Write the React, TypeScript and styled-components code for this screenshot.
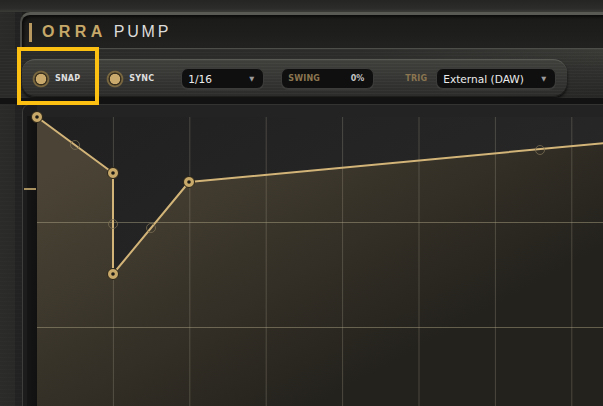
import React from "react";
import styled, { createGlobalStyle } from "styled-components";

const Global = createGlobalStyle`
  html, body { margin: 0; padding: 0; background: #1c1c1b; }
  #root { width: 603px; height: 406px; }
`;

const Root = styled.div`
  position: relative;
  width: 603px;
  height: 406px;
  overflow: hidden;
  display: flex;
  flex-direction: column;
  background:
    repeating-linear-gradient(0deg, rgba(255,255,255,0.012) 0 1px, transparent 1px 4px),
    linear-gradient(90deg, #2b2c2a 0px, #292a28 15px, #222 15px, #222 22px, #1c1c1b 22px);
  font-family: "DejaVu Sans", "Liberation Sans", sans-serif;
`;

const TopStrip = styled.div`
  height: 12px;
  flex: none;
  background: linear-gradient(180deg, #252624 0%, #2c2d2b 70%, #3a3a37 100%);
`;

const Header = styled.div`
  flex: none;
  height: 33px;
  margin-left: 20px;
  display: flex;
  align-items: center;
  padding-left: 7px;
  background: linear-gradient(180deg, #1a1a19 0%, #1e1e1c 60%, #222220 100%);
  border-top: 3px solid #5a5a54;
  border-left: 2px solid #4a4a46;
  border-bottom: 1px solid #4d4d49;
  border-top-left-radius: 10px;
  box-shadow: inset 2px 2px 3px rgba(0, 0, 0, 0.6);
`;

const GoldBar = styled.span`
  width: 3px;
  height: 19px;
  background: #b89a60;
  margin-right: 10px;
  margin-top: 1px;
`;

const Brand = styled.span`
  font-family: "Liberation Sans", Arial, sans-serif;
  font-weight: 700;
  font-size: 16px;
  letter-spacing: 4.4px;
  color: #c6a869;
  margin-right: 7px;
`;

const Product = styled.span`
  font-family: "Liberation Sans", Arial, sans-serif;
  font-weight: 400;
  font-size: 16px;
  letter-spacing: 2.8px;
  color: #dcdcda;
`;

const ToolbarBand = styled.div`
  flex: none;
  height: 49px;
  box-sizing: border-box;
  padding: 10px 0 0 22px;
  display: flex;
  background:
    repeating-linear-gradient(0deg, rgba(255,255,255,0.025) 0 1px, transparent 1px 3px),
    linear-gradient(90deg, #2a2a28 0%, #2c2c2a 60%, #34343a00 100%),
    linear-gradient(180deg, #3a3a37 0%, #30302e 40%, #262625 100%);
`;

const Toolbar = styled.div`
  width: 545px;
  height: 38px;
  box-sizing: border-box;
  display: flex;
  align-items: center;
  padding-left: 10px;
  border-radius: 13px 14px 14px 13px;
  border-top: 1px solid #5a5a55;
  background:
    repeating-linear-gradient(0deg, rgba(255,255,255,0.03) 0 1px, transparent 1px 3px),
    linear-gradient(180deg, #3f3f3c 0%, #363634 45%, #2b2b29 100%);
  box-shadow: 0 2px 3px rgba(0, 0, 0, 0.7), inset 0 -1px 0 rgba(0,0,0,0.4);
`;

const Radio = styled.span<{ $ml?: number }>`
  width: 18px;
  height: 18px;
  flex: none;
  border-radius: 50%;
  margin-left: ${(p) => p.$ml ?? 0}px;
  background: radial-gradient(
    circle,
    #c9aa6c 0 4.9px,
    #3a301f 5.4px 6.2px,
    #78663f 6.8px 7.8px,
    rgba(100, 86, 58, 0.45) 8.5px,
    transparent 9px
  );
`;

const Label = styled.span<{ $ml?: number; $gold?: boolean }>`
  margin-left: ${(p) => p.$ml ?? 0}px;
  font-family: "DejaVu Sans", sans-serif;
  font-weight: 700;
  font-size: 8px;
  letter-spacing: 0.2px;
  color: ${(p) => (p.$gold ? "#8a7550" : "#dedede")};
`;

const Field = styled.div<{ $w: number; $ml: number }>`
  width: ${(p) => p.$w}px;
  margin-left: ${(p) => p.$ml}px;
  height: 21px;
  box-sizing: border-box;
  display: flex;
  align-items: center;
  justify-content: space-between;
  padding: 0 9px 0 6px;
  border-radius: 7px;
  border: 1px solid #3c3c3a;
  background: #0f0f0f;
  box-shadow: 0 1px 0 rgba(255,255,255,0.05);
`;

const FieldText = styled.span`
  font-family: "DejaVu Sans", sans-serif;
  font-size: 10.6px;
  color: #ececec;
`;

const Arrow = styled.span`
  font-size: 6.5px;
  color: #9a9a9a;
  margin-top: 1px;
`;

const Value = styled.span`
  font-family: "DejaVu Sans", sans-serif;
  font-weight: 700;
  font-size: 8px;
  color: #c4c4c4;
`;

const Gap = styled.div`
  flex: none;
  height: 6px;
  background: #121212;
`;

const GraphPanel = styled.div`
  flex: 1;
  margin-left: 22px;
  display: flex;
  border-top: 1px solid #333331;
  border-left: 1px solid #3e3e3c;
  border-top-left-radius: 8px;
  background: #232323;
  overflow: hidden;
`;

const Meter = styled.div`
  position: relative;
  width: 14px;
  flex: none;
  display: flex;
  padding-top: 11px;
  background: #1c1c1c;
`;

const MeterTrack = styled.div`
  margin-left: 4px;
  flex: 1;
  background: linear-gradient(90deg, #151515, #111);
`;

const MeterTick = styled.span`
  position: absolute;
  left: 1px;
  top: 83px;
  width: 12px;
  height: 2px;
  background: #a8915f;
`;

const PAD = 8;

const Chart = styled.svg`
  display: block;
  flex: none;
  margin-left: -${PAD}px;
  position: relative;
`;

const W = 566;
const H = 302;
const TOP = 12;
const STEP = 76.4;

const pts: [number, number][] = [
  [0, 12],
  [76, 68],
  [76, 169],
  [152, 77],
  [W + 2, 38],
];

const handles: [number, number][] = [
  [38, 40],
  [76, 119],
  [114, 123],
  [503, 45],
];

function Graph() {
  const line = pts.map((p) => p.join(",")).join(" ");
  const area = `0,${H} ${line} ${W + 2},${H}`;
  const vx = Array.from({ length: 7 }, (_, i) => (i + 1) * STEP);
  return (
    <Chart width={W + PAD} height={H} viewBox={`-${PAD} 0 ${W + PAD} ${H}`}>
      <defs>
        <linearGradient id="bg" x1="0" y1="0" x2="1" y2="1">
          <stop offset="0" stopColor="#202020" />
          <stop offset="1" stopColor="#2c2c2c" />
        </linearGradient>
        <linearGradient id="fill" gradientUnits="userSpaceOnUse" x1="100" y1="20" x2="260" y2="310">
          <stop offset="0" stopColor="#4b4436" />
          <stop offset="0.5" stopColor="#383329" />
          <stop offset="1" stopColor="#24221d" />
        </linearGradient>
      </defs>
      <rect x="0" y={TOP} width={W} height={H - TOP} fill="url(#bg)" />
      <polygon points={area} fill="url(#fill)" />
      {vx.map((x) => (
        <line key={x} x1={x} y1={TOP} x2={x} y2={H} stroke="#a8a290" strokeOpacity="0.3" strokeWidth="1" />
      ))}
      {[117, 222].map((y) => (
        <line key={y} x1={0} y1={y + 0.5} x2={W} y2={y + 0.5} stroke="#b3aa8a" strokeOpacity="0.45" strokeWidth="1" />
      ))}
      <polyline points={line} fill="none" stroke="#d2b478" strokeWidth="2" strokeLinejoin="round" />
      {handles.map(([x, y]) => (
        <circle key={`${x}-${y}`} cx={x} cy={y} r="4.5" fill="none" stroke="#7a6e52" strokeOpacity="0.8" strokeWidth="1" />
      ))}
      {pts.slice(0, 4).map(([x, y]) => (
        <g key={`${x}-${y}`}>
          <circle cx={x} cy={y} r="5.5" fill="#c8a96a" stroke="#2a2418" strokeWidth="1" />
          <circle cx={x} cy={y} r="1.8" fill="#1c1a16" />
        </g>
      ))}
    </Chart>
  );
}

const Highlight = styled.div`
  position: absolute;
  left: 17px;
  top: 47px;
  width: 82px;
  height: 58px;
  box-sizing: border-box;
  border: 4px solid #fbc012;
  pointer-events: none;
`;

export default function App() {
  return (
    <>
      <Global />
      <Root>
        <TopStrip />
        <Header>
          <GoldBar />
          <Brand>ORRA</Brand>
          <Product>PUMP</Product>
        </Header>
        <ToolbarBand>
          <Toolbar>
            <Radio />
            <Label $ml={5}>SNAP</Label>
            <Radio $ml={26} />
            <Label $ml={5}>SYNC</Label>
            <Field $w={83} $ml={27}>
              <FieldText>1/16</FieldText>
              <Arrow>▼</Arrow>
            </Field>
            <Field $w={93} $ml={17}>
              <Label $gold>SWING</Label>
              <Value>0%</Value>
            </Field>
            <Label $gold $ml={31}>TRIG</Label>
            <Field $w={120} $ml={9}>
              <FieldText>External (DAW)</FieldText>
              <Arrow>▼</Arrow>
            </Field>
          </Toolbar>
        </ToolbarBand>
        <Gap />
        <GraphPanel>
          <Meter>
            <MeterTrack />
            <MeterTick />
          </Meter>
          <Graph />
        </GraphPanel>
        <Highlight />
      </Root>
    </>
  );
}
